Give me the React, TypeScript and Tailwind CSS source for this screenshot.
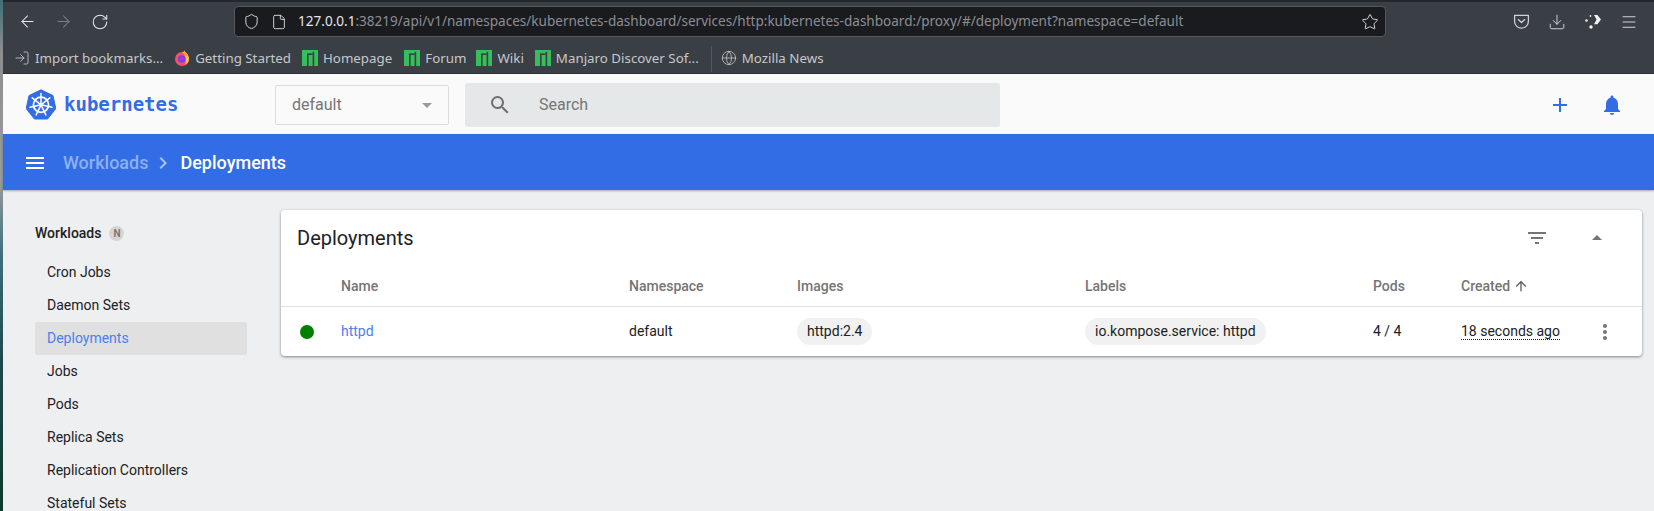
import { ArrowLeft, ArrowRight, RotateCw, Shield, File, Star, Download, Menu, Globe, LogIn } from 'lucide-react';
import { MdMenu, MdSearch, MdAdd, MdNotifications, MdFilterList, MdMoreVert, MdArrowUpward, MdArrowDropUp, MdChevronRight, MdArrowDropDown } from 'react-icons/md';

const sideItems = ['Cron Jobs', 'Daemon Sets', 'Deployments', 'Jobs', 'Pods', 'Replica Sets', 'Replication Controllers', 'Stateful Sets'];

function ManjaroIcon() {
  return (
    <svg width="16" height="16" viewBox="0 0 16 16" className="shrink-0">
      <rect width="16" height="16" fill="#35bf5c" />
      <rect x="5" y="5" width="1.6" height="11" fill="#3a3e45" />
      <rect x="10.6" y="1.8" width="1.6" height="14.2" fill="#3a3e45" />
      <rect x="5" y="3.4" width="5.6" height="1.6" fill="#3a3e45" />
    </svg>
  );
}

function FirefoxIcon() {
  return (
    <svg width="16" height="16" viewBox="0 0 16 16" className="shrink-0">
      <circle cx="8" cy="9" r="7" fill="#ff4f5e" />
      <path d="M8 2 C12 1 15 5 15 9 C15 12 13 14 11 15 C13 11 12 5 8 2Z" fill="#ffbd4f" />
      <path d="M10 0 C11 2 13 3 14 6 L10 5Z" fill="#ff9640" />
      <circle cx="7.6" cy="9" r="3.8" fill="#7542e5" />
      <circle cx="7.6" cy="8.6" r="1.8" fill="#b833e1" />
    </svg>
  );
}

function KubeLogo() {
  const spokes = [0, 51.4, 102.8, 154.2, 205.7, 257.1, 308.5];
  return (
    <svg width="30" height="31" viewBox="0 0 30 31" className="shrink-0">
      <path d="M15 .8 27 6.6 29.8 19.6 21.6 30H8.4L.2 19.6 3 6.6Z" fill="#326de6" stroke="#326de6" strokeLinejoin="round" />
      <circle cx="15" cy="15.8" r="7.6" fill="none" stroke="#fff" strokeWidth="1.7" />
      <circle cx="15" cy="15.8" r="1.8" fill="#fff" />
      {spokes.map((a) => (
        <line key={a} x1="15" y1="15.8" x2="15" y2="4.6" stroke="#fff" strokeWidth="1.5" strokeLinecap="round" transform={`rotate(${a} 15 15.8)`} />
      ))}
    </svg>
  );
}

function PocketIcon() {
  return (
    <svg width="17" height="17" viewBox="0 0 16 16" fill="none" stroke="#d0d2d5" strokeWidth="1.2" className="shrink-0">
      <path d="M1.5 2.2h13v5.6a6.5 6.5 0 0 1-13 0Z" strokeLinejoin="round" />
      <path d="M5 6.2 8 9l3-2.8" strokeLinecap="round" strokeLinejoin="round" />
    </svg>
  );
}

function ExtensionIcon() {
  return (
    <svg width="18" height="18" viewBox="0 0 18 18" className="shrink-0">
      <circle cx="6.5" cy="3" r="0.9" fill="#e8e9ea" />
      <circle cx="2.5" cy="7.5" r="1.3" fill="#e8e9ea" />
      <circle cx="7" cy="14" r="1.7" fill="#f4f4f4" />
      <path d="M10 2h3.4l3.6 4.6-3.6 4.6H10l2.6-4.6Z" fill="#f4f4f4" />
    </svg>
  );
}

function Bookmark({ icon, label, className }: { icon: React.ReactNode; label: string; className?: string }) {
  return (
    <div className={`flex items-center gap-[5px] ${className ?? ''}`}>
      {icon}
      <span className="whitespace-nowrap">{label}</span>
    </div>
  );
}

export default function App() {
  return (
    <div className="flex h-[511px] w-[1654px] overflow-hidden font-['Roboto',sans-serif]">
      <div className="w-[3px] shrink-0 bg-[linear-gradient(180deg,#3f6f78_0%,#8b8d8f_10%,#9a9c9e_35%,#3d6f7a_50%,#21484f_70%,#0f3a2b_100%)]" />

      <div className="flex min-w-0 flex-1 flex-col bg-[#eeeff1]">
        {/* browser chrome */}
        <div className="h-[74px] shrink-0 border-b border-[#2b2e33] border-t-2 border-t-[#24272b] bg-[#3a3e45] font-['Noto_Sans',sans-serif] text-[#d3d4d6]">
          <div className="flex h-[39px] items-center">
            <ArrowLeft size={19} strokeWidth={1.3} className="ml-[15px] text-[#e8e9ea]" />
            <ArrowRight size={19} strokeWidth={1.3} className="ml-[17px] text-[#7d8085]" />
            <RotateCw size={18} strokeWidth={1.4} className="ml-[18px] text-[#e8e9ea]" />
            <div className="ml-[125px] flex h-[31px] w-[1152px] items-center rounded-[4px] border border-[#55585e] bg-[#1a1b1f]">
              <Shield size={17} strokeWidth={1.4} className="ml-[8px] text-[#d8d9db]" />
              <File size={16} strokeWidth={1.4} className="ml-[11px] text-[#d8d9db]" />
              <span className="ml-[11px] whitespace-nowrap text-[13.55px] text-[#8c8e92]">
                <span className="text-[#e4e5e6]">127.0.0.1</span>:38219/api/v1/namespaces/kubernetes-dashboard/services/http:kubernetes-dashboard:/proxy/#/deployment?namespace=default
              </span>
              <Star size={18} strokeWidth={1.3} className="ml-auto mr-[6px] text-[#d8d9db]" />
            </div>
            <div className="ml-[127px] flex items-center gap-[18px]">
              <PocketIcon />
              <Download size={18} strokeWidth={1.3} className="text-[#d0d2d5]" />
              <ExtensionIcon />
              <Menu size={18} strokeWidth={1.3} className="text-[#d8d9db]" />
            </div>
          </div>
          <div className="flex h-[33px] items-center pt-[2px] text-[13.33px] text-[#c6c8ca]">
            <Bookmark className="ml-[11px]" icon={<LogIn size={16} strokeWidth={1.3} />} label="Import bookmarks..." />
            <Bookmark className="ml-[11px]" icon={<FirefoxIcon />} label="Getting Started" />
            <Bookmark className="ml-[11px]" icon={<ManjaroIcon />} label="Homepage" />
            <Bookmark className="ml-[12px]" icon={<ManjaroIcon />} label="Forum" />
            <Bookmark className="ml-[10px]" icon={<ManjaroIcon />} label="Wiki" />
            <Bookmark className="ml-[11px]" icon={<ManjaroIcon />} label="Manjaro Discover Sof..." />
            <div className="ml-[12px] h-[26px] w-px bg-[#55585e]" />
            <Bookmark className="ml-[9px]" icon={<Globe size={16} strokeWidth={1.2} />} label="Mozilla News" />
          </div>
        </div>

        {/* dashboard header */}
        <div className="flex h-[60px] shrink-0 items-center bg-[#fafafa] pt-[1px]">
          <div className="ml-[23px]"><KubeLogo /></div>
          <span className="ml-[8px] w-[211px] font-['DejaVu_Sans_Mono',monospace] text-[19px] font-bold text-[#326de6]">kubernetes</span>
          <div className="flex h-[40px] w-[174px] items-center rounded-[2px] border border-[#dcdcdc] pl-[16px] pr-[9px] text-[16px] text-[#757575]">
            default
            <MdArrowDropDown size={24} className="ml-auto text-[#9a9a9a]" />
          </div>
          <div className="ml-[16px] flex h-[44px] w-[535px] items-center rounded-[2px] bg-[#e5e8e9] pl-[23px] text-[16px] text-[#757575]">
            <MdSearch size={24} className="text-[#6e6e6e]" />
            <span className="ml-[27px]">Search</span>
          </div>
          <MdAdd size={24} className="ml-auto text-[#326de6]" />
          <MdNotifications size={24} className="ml-[28px] mr-[30px] text-[#326de6]" />
        </div>

        {/* breadcrumbs */}
        <div className="flex h-[56px] shrink-0 items-center bg-[#326de6] pt-[1px] text-[18px] font-medium shadow-[0_1px_2px_rgba(0,0,0,0.3)]">
          <MdMenu size={24} className="ml-[20px] text-white" />
          <span className="ml-[16px] text-[#8eb0f2]">Workloads</span>
          <MdChevronRight size={24} className="ml-[3px] text-[#a9c3f5]" />
          <span className="ml-[5px] text-white">Deployments</span>
        </div>

        <div className="flex min-h-0 flex-1">
          {/* side nav */}
          <div className="w-[278px] shrink-0 pl-[32px] pt-[27px] text-[14px] text-[#202124]">
            <div className="flex h-[33px] items-center font-medium">
              Workloads
              <span className="ml-[8px] flex h-[15px] w-[15px] items-center justify-center rounded-full bg-[#d4d4d4] text-[10px] text-[#6c6c6c]">N</span>
            </div>
            <div className="mt-[6px]">
              {sideItems.map((item) => (
                <div
                  key={item}
                  className={`flex h-[33px] items-center pl-[12px] ${item === 'Deployments' ? 'w-[212px] rounded-[2px] bg-[#e0e0e0] text-[#4a7ff0]' : ''}`}
                >
                  {item}
                </div>
              ))}
            </div>
          </div>

          {/* deployments card */}
          <div className="flex-1 pt-[20px] pr-[12px]">
            <div className="h-[146px] rounded-[4px] bg-white shadow-[0_1px_3px_rgba(0,0,0,0.45)]">
              <div className="flex h-[56px] items-center pl-[16px] text-[20px] text-[#202124]">
                Deployments
                <MdFilterList size={24} className="ml-auto text-[#757575]" />
                <MdArrowDropUp size={24} className="ml-[36px] mr-[33px] text-[#757575]" />
              </div>
              <div className="flex h-[41px] items-center border-b border-[#e0e0e0] text-[14px] font-medium text-[#757575]">
                <span className="ml-[60px] w-[288px]">Name</span>
                <span className="w-[168px]">Namespace</span>
                <span className="w-[288px]">Images</span>
                <span className="w-[288px]">Labels</span>
                <span className="w-[88px]">Pods</span>
                <span className="flex items-center">Created <MdArrowUpward size={16} className="ml-[3px] text-[#5f5f5f]" /></span>
              </div>
              <div className="flex h-[49px] items-center text-[14px] text-[#202124]">
                <span className="ml-[19px] h-[14px] w-[14px] shrink-0 rounded-full bg-[#008000]" />
                <span className="ml-[27px] w-[288px] text-[#4a7ff0]">httpd</span>
                <span className="w-[168px]">default</span>
                <span className="w-[288px]">
                  <span className="inline-block rounded-full bg-[#f1f1f1] px-[10px] py-[3px]">httpd:2.4</span>
                </span>
                <span className="w-[288px]">
                  <span className="inline-block rounded-full bg-[#f1f1f1] px-[10px] py-[3px]">io.kompose.service: httpd</span>
                </span>
                <span className="w-[88px]">4 / 4</span>
                <span className="border-b border-dotted border-[#202124] leading-[15px]">18 seconds ago</span>
                <MdMoreVert size={24} className="ml-[33px] text-[#757575]" />
              </div>
            </div>
          </div>
        </div>
      </div>
    </div>
  );
}
